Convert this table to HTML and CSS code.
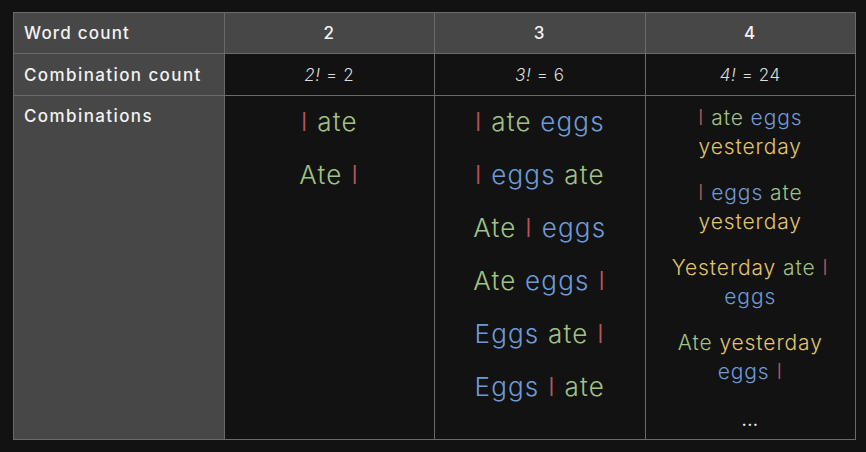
FILE: index.html
```html
<!DOCTYPE html>
<html>
<head>
<meta charset="utf-8">
<link rel="stylesheet" href="styles.css">
</head>
<body>
<table class="perm">
  <colgroup><col class="c"><col class="c"><col class="c"><col class="c"></colgroup>
  <tr class="head">
    <td class="label">Word count</td>
    <td class="num">2</td>
    <td class="num">3</td>
    <td class="num">4</td>
  </tr>
  <tr class="count">
    <td class="label">Combination count</td>
    <td class="fact"><i>2!</i> = 2</td>
    <td class="fact"><i>3!</i> = 6</td>
    <td class="fact"><i>4!</i> = 24</td>
  </tr>
  <tr class="combos">
    <td class="label top">Combinations</td>
    <td class="list big">
      <div class="item"><span class="r">I</span> <span class="g">ate</span></div>
      <div class="item"><span class="g">Ate</span> <span class="r">I</span></div>
    </td>
    <td class="list big">
      <div class="item"><span class="r">I</span> <span class="g">ate</span> <span class="b">eggs</span></div>
      <div class="item"><span class="r">I</span> <span class="b">eggs</span> <span class="g">ate</span></div>
      <div class="item"><span class="g">Ate</span> <span class="r">I</span> <span class="b">eggs</span></div>
      <div class="item"><span class="g">Ate</span> <span class="b">eggs</span> <span class="r">I</span></div>
      <div class="item"><span class="b">Eggs</span> <span class="g">ate</span> <span class="r">I</span></div>
      <div class="item"><span class="b">Eggs</span> <span class="r">I</span> <span class="g">ate</span></div>
    </td>
    <td class="list small">
      <div class="item"><span class="r">I</span> <span class="g">ate</span> <span class="b">eggs</span><br><span class="y">yesterday</span></div>
      <div class="item"><span class="r">I</span> <span class="b">eggs</span> <span class="g">ate</span><br><span class="y">yesterday</span></div>
      <div class="item"><span class="y">Yesterday</span> <span class="g">ate</span> <span class="r">I</span><br><span class="b">eggs</span></div>
      <div class="item"><span class="g">Ate</span> <span class="y">yesterday</span><br><span class="b">eggs</span> <span class="r">I</span></div>
      <div class="more">...</div>
    </td>
  </tr>
</table>
</body>
</html>
```
FILE: styles.css
```css
html, body {
  background: #121212;
}
body {
  margin: 0;
  padding: 12px 0 0 13px;
  font-family: "Inter", "Open Sans", sans-serif;
  color: #eeeeee;
}
.perm {
  border-collapse: collapse;
  table-layout: fixed;
  width: 843px;
}
.perm td {
  border: 1px solid #6a6a6a;
  padding: 0 10px;
}
.head td {
  background: #474747;
  height: 40px;
  font-size: 17px;
  font-weight: 500;
  letter-spacing: 1.2px;
}
.label {
  background: #474747;
  font-size: 17px;
  font-weight: 500;
  letter-spacing: 1.4px;
  color: #f2f2f2;
}
.num {
  text-align: center;
  color: #f2f2f2;
}
.count td {
  height: 41px;
}
.fact {
  text-align: center;
  font-size: 17px;
  font-weight: 300;
  letter-spacing: 0.6px;
  color: #dcdcdc;
  background: #121212;
}
.fact i { font-style: italic; }
.combos {
  height: 344px;
}
.combos td {
  vertical-align: top;
}
.label.top {
  padding-top: 10px;
}
.list {
  background: #121212;
  text-align: center;
  font-weight: 300;
}
.list.big {
  padding-top: 7px;
  font-size: 26px;
  line-height: 37px;
  letter-spacing: 1.2px;
}
.list.big .item { margin-bottom: 16px; }
.list.small {
  padding-top: 7px;
  font-size: 21px;
  line-height: 29px;
  letter-spacing: 0.9px;
}
.list.small .item { margin-bottom: 17px; }
.more {
  font-size: 15px;
  line-height: 20px;
  padding-top: 8px;
  font-weight: 600;
  color: #f0f0f0;
}
.r { color: #b8545d; }
.g { color: #a1c283; }
.b { color: #6e9bd8; }
.y { color: #e2c56d; }
```
